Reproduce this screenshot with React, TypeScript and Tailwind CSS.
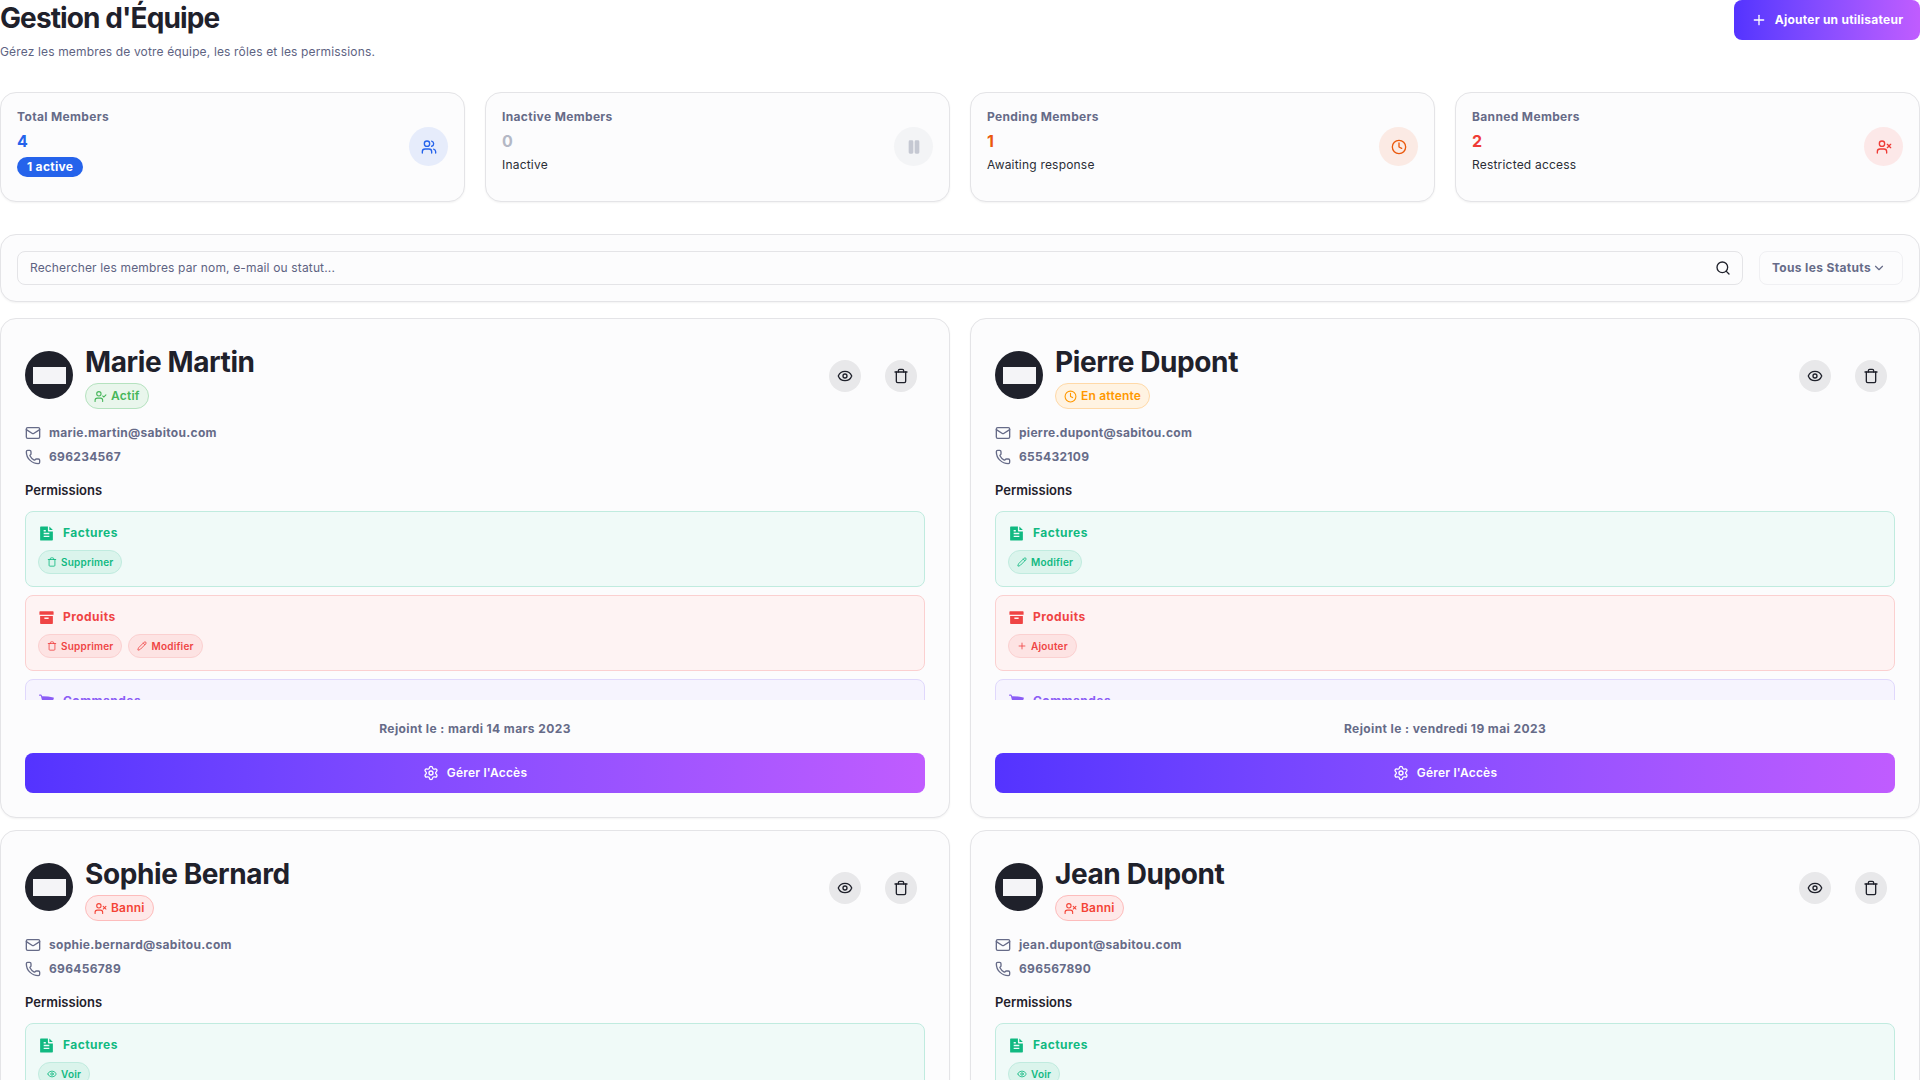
import React from "react";
import {
  ChevronDown,
  Clock,
  Eye,
  Mail,
  Pause,
  Pencil,
  Phone,
  Plus,
  Search,
  Settings,
  Trash,
  UserCheck,
  UserX,
  Users,
} from "lucide-react";
import { RiArchiveFill, RiFileTextFill } from "react-icons/ri";
import { HiShoppingCart } from "react-icons/hi2";

const chipIcons: any = {
  Supprimer: Trash,
  Modifier: Pencil,
  Ajouter: Plus,
  Voir: Eye,
};

const statusStyles: any = {
  Actif: { box: "bg-[#e9f6ec] border-[#b5e2bf] text-[#46b65a]", icon: UserCheck },
  "En attente": { box: "bg-[#fff3e2] border-[#ffd9a8] text-[#ff9800]", icon: Clock },
  Banni: { box: "bg-[#fee9e9] border-[#fdbcbc] text-[#f44336]", icon: UserX },
};

const members = [
  {
    name: "Marie Martin",
    status: "Actif",
    email: "marie.martin@sabitou.com",
    phone: "696234567",
    joined: "mardi 14 mars 2023",
    factures: ["Supprimer"],
    produits: ["Supprimer", "Modifier"],
  },
  {
    name: "Pierre Dupont",
    status: "En attente",
    email: "pierre.dupont@sabitou.com",
    phone: "655432109",
    joined: "vendredi 19 mai 2023",
    factures: ["Modifier"],
    produits: ["Ajouter"],
  },
  {
    name: "Sophie Bernard",
    status: "Banni",
    email: "sophie.bernard@sabitou.com",
    phone: "696456789",
    joined: "lundi 3 avril 2023",
    factures: ["Voir"],
    produits: ["Voir"],
  },
  {
    name: "Jean Dupont",
    status: "Banni",
    email: "jean.dupont@sabitou.com",
    phone: "696567890",
    joined: "jeudi 8 juin 2023",
    factures: ["Voir"],
    produits: ["Voir"],
  },
];

function StatCard({ title, value, valueClass, sub, badge, iconBg, icon: Icon, iconClass }: any) {
  return (
    <div className="flex h-[110px] items-start justify-between rounded-2xl border border-[#e4e4e7] bg-[#fcfcfd] pt-[15px] pr-[16px] pl-[16px] shadow-[0_1px_2px_rgba(0,0,0,0.05)]">
      <div>
        <p className="text-[12px] leading-[18px] font-bold tracking-[0.35px] text-[#666b88]">{title}</p>
        <p className={`mt-[3px] text-[16px] leading-[24px] font-bold ${valueClass}`}>{value}</p>
        {badge ? (
          <span className="mt-[4px] block w-fit rounded-full bg-[#2563eb] px-[10px] text-[12px] leading-[20px] font-bold tracking-[0.3px] text-white">
            {badge}
          </span>
        ) : (
          <p className="mt-[2px] text-[12px] leading-[20px] tracking-[0.2px] text-[#2a2d36]">{sub}</p>
        )}
      </div>
      <div className={`mt-[19px] flex h-[39px] w-[39px] items-center justify-center rounded-full ${iconBg}`}>
        <Icon className={`h-[16px] w-[16px] ${iconClass}`} />
      </div>
    </div>
  );
}

function PermBox({ label, chips, icon: Icon, box, text, chip }: any) {
  return (
    <div className={`h-[76px] shrink-0 rounded-lg border px-[12px] pt-[11px] ${box}`}>
      <div className={`flex items-center gap-[8px] text-[12px] leading-[20px] font-bold tracking-[0.45px] ${text}`}>
        <Icon className="h-[17px] w-[17px]" />
        {label}
      </div>
      <div className="mt-[7px] flex gap-[6px]">
        {chips.map((c: string) => {
          const ChipIcon = chipIcons[c];
          return (
            <span
              key={c}
              className={`flex h-[24px] items-center gap-[4px] rounded-full border px-[8px] text-[10px] font-semibold tracking-[0.2px] ${chip} ${text}`}
            >
              <ChipIcon className="h-[10px] w-[10px]" />
              {c}
            </span>
          );
        })}
      </div>
    </div>
  );
}

function MemberCard({ m }: any) {
  const st = statusStyles[m.status];
  const StatusIcon = st.icon;
  return (
    <div className="flex h-[500px] flex-col rounded-2xl border border-[#e4e4e7] bg-[#fcfcfd] px-[24px] pt-[25px] shadow-[0_1px_2px_rgba(0,0,0,0.05)]">
      <div className="flex items-start justify-between">
        <div className="flex gap-[12px]">
          <div className="mt-[7px] flex h-[48px] w-[48px] items-center justify-center rounded-full bg-[#1f212b]">
            <div className="h-[17px] w-[33px] bg-[#f4f4f7]"></div>
          </div>
          <div>
            <h3 className="text-[28px] leading-[36px] font-bold tracking-[-0.4px] text-[#1f212b]">{m.name}</h3>
            <span className={`mt-[3px] flex h-[26px] w-fit items-center gap-[4px] rounded-full border px-[8px] text-[12px] font-semibold tracking-[0.2px] ${st.box}`}>
              <StatusIcon className="h-[13px] w-[13px]" />
              {m.status}
            </span>
          </div>
        </div>
        <div className="mt-[16px] mr-[8px] flex gap-[24px]">
          <button className="flex h-[32px] w-[32px] items-center justify-center rounded-full bg-[#e8e8ea] text-[#1f212b]">
            <Eye className="h-[16px] w-[16px]" />
          </button>
          <button className="flex h-[32px] w-[32px] items-center justify-center rounded-full bg-[#e8e8ea] text-[#1f212b]">
            <Trash className="h-[16px] w-[16px]" />
          </button>
        </div>
      </div>
      <div className="mt-[12px] flex items-center gap-[8px] text-[12px] leading-[24px] font-bold tracking-[0.3px] text-[#666b88]">
        <Mail className="h-[16px] w-[16px]" />
        {m.email}
      </div>
      <div className="flex items-center gap-[8px] text-[12px] leading-[24px] font-bold tracking-[0.3px] text-[#666b88]">
        <Phone className="h-[16px] w-[16px]" />
        {m.phone}
      </div>
      <p className="mt-[9px] text-[13px] leading-[24px] font-semibold text-[#1f212b]">Permissions</p>
      <div className="mt-[9px] flex h-[189px] flex-col gap-[8px] overflow-hidden">
        <PermBox label="Factures" chips={m.factures} icon={RiFileTextFill} box="bg-[#f0faf8] border-[#c0ebdf]" text="text-[#10b981]" chip="bg-[#dbf4ec] border-[#c0ebdf]" />
        <PermBox label="Produits" chips={m.produits} icon={RiArchiveFill} box="bg-[#fef3f3] border-[#fbd0d0]" text="text-[#ef4444]" chip="bg-[#fde3e3] border-[#fbd0d0]" />
        <PermBox label="Commandes" chips={["Voir"]} icon={HiShoppingCart} box="bg-[#f6f4fe] border-[#e0d8fc]" text="text-[#8b5cf6]" chip="bg-[#ece6fd] border-[#e0d8fc]" />
      </div>
      <p className="mt-[19px] text-center text-[12px] leading-[20px] font-bold tracking-[0.4px] text-[#666b88]">
        Rejoint le : {m.joined}
      </p>
      <button className="mt-[14px] flex h-[40px] shrink-0 items-center justify-center gap-[8px] rounded-lg bg-gradient-to-r from-[#5433ff] to-[#c05cff] text-[12px] font-semibold tracking-[0.2px] text-white">
        <Settings className="h-[16px] w-[16px]" />
        Gérer l'Accès
      </button>
    </div>
  );
}

export default function App() {
  return (
    <div className="h-screen overflow-hidden bg-white font-['Inter',sans-serif]">
      <div className="flex items-start justify-between">
        <div>
          <h1 className="text-[28px] leading-[36px] font-bold tracking-[-0.9px] text-[#1f212b]">Gestion d'Équipe</h1>
          <p className="mt-[8px] text-[12px] leading-[16px] tracking-[0.15px] text-[#5e6382]">
            Gérez les membres de votre équipe, les rôles et les permissions.
          </p>
        </div>
        <button className="flex h-[40px] w-[186px] items-center justify-center gap-[8px] rounded-lg bg-gradient-to-r from-[#5433ff] to-[#c05cff] text-[12px] font-bold tracking-[0.25px] text-white">
          <Plus className="h-[16px] w-[16px]" />
          Ajouter un utilisateur
        </button>
      </div>

      <div className="mt-[32px] grid grid-cols-4 gap-[20px]">
        <StatCard title="Total Members" value="4" valueClass="text-[#2563eb]" badge="1 active" iconBg="bg-[#e6ecfb]" icon={Users} iconClass="text-[#2563eb]" />
        <StatCard title="Inactive Members" value="0" valueClass="text-[#b4b8c5]" sub="Inactive" iconBg="bg-[#f3f4f6]" icon={Pause} iconClass="fill-current text-[#c5c8d2]" />
        <StatCard title="Pending Members" value="1" valueClass="text-[#ea580c]" sub="Awaiting response" iconBg="bg-[#fbeae4]" icon={Clock} iconClass="text-[#ea580c]" />
        <StatCard title="Banned Members" value="2" valueClass="text-[#ef3b36]" sub="Restricted access" iconBg="bg-[#fce8e8]" icon={UserX} iconClass="text-[#ef3b36]" />
      </div>

      <div className="mt-[32px] flex h-[68px] items-center gap-[16px] rounded-2xl border border-[#e4e4e7] bg-[#fcfcfd] px-[16px] shadow-[0_1px_2px_rgba(0,0,0,0.05)]">
        <div className="flex h-[34px] flex-1 items-center justify-between rounded-lg border border-[#e4e4e7] pr-[11px] pl-[12px]">
          <span className="text-[12px] tracking-[0.15px] text-[#5e6382]">Rechercher les membres par nom, e-mail ou statut...</span>
          <Search className="h-[16px] w-[16px] text-[#1f212b]" />
        </div>
        <div className="flex h-[34px] w-[144px] items-center justify-center gap-[1px] rounded-lg border border-[#f0f0f3] pr-[4px] text-[12px] font-bold tracking-[0.35px] text-[#666b88]">
          Tous les Statuts
          <ChevronDown className="h-[14px] w-[14px]" />
        </div>
      </div>

      <div className="mt-[16px] grid grid-cols-2 gap-x-[20px] gap-y-[12px]">
        {members.map((m) => (
          <MemberCard key={m.name} m={m} />
        ))}
      </div>
    </div>
  );
}
